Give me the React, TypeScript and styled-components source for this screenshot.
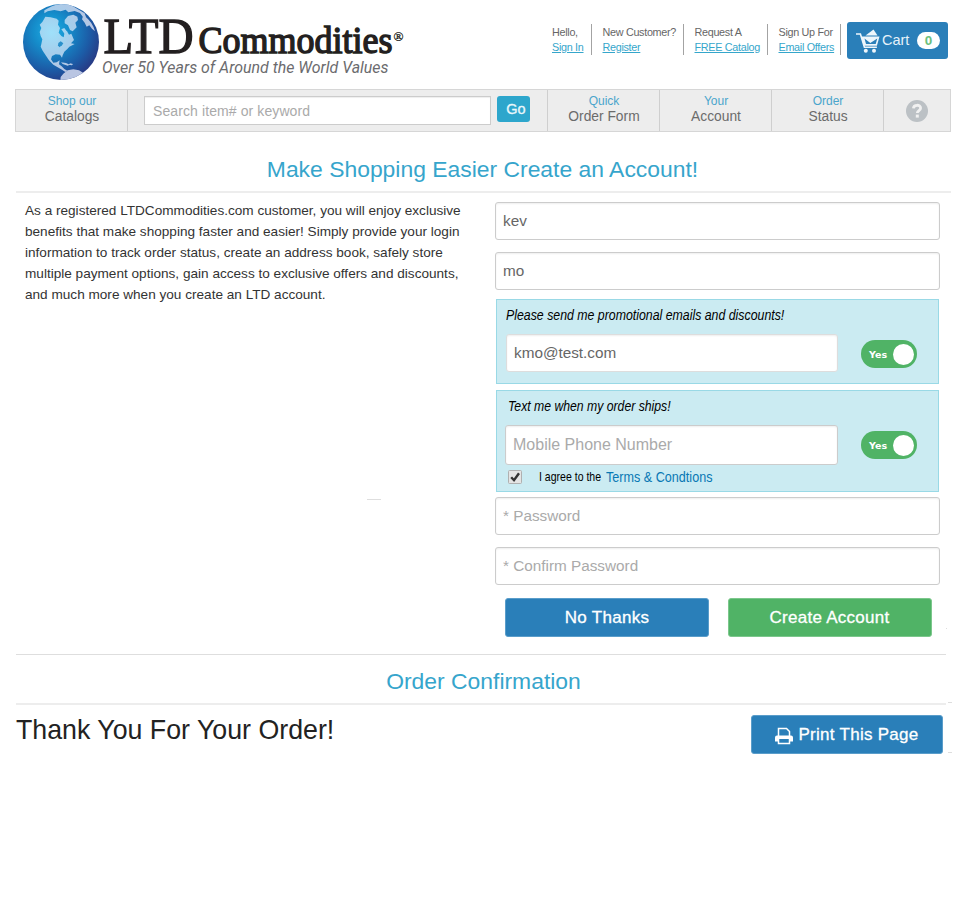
import React from "react";
import styled, { createGlobalStyle } from "styled-components";

const GlobalStyle = createGlobalStyle`
  *, *::before, *::after { box-sizing: border-box; }
  body { margin: 0; background: #fff; font-family: "Liberation Sans", Arial, sans-serif; }
  button, input { font-family: inherit; }
`;

const Page = styled.div`
  position: relative;
  width: 973px;
  height: 904px;
  overflow: hidden;
  background: #fff;
`;

/* ---------- header ---------- */

const Header = styled.header`
  display: flex;
  align-items: flex-start;
  height: 89px;
  padding: 0 25px 0 20px;
`;

const Logo = styled.svg`
  display: block;
  width: 400px;
  height: 84px;
`;

const Links = styled.div`
  display: flex;
  margin-left: auto;
  padding-top: 24px;
`;

const LinkGroup = styled.div<{ $width: number }>`
  display: flex;
  flex-direction: column;
  align-items: flex-start;
  width: ${(p) => p.$width}px;
  height: 31px;
  padding: 1px 0 0 10.5px;
  border-right: 1px solid #a3a3a3;
  font-size: 10.8px;
  letter-spacing: -0.3px;
  line-height: 15px;
  white-space: nowrap;
  color: #666;
`;

const HeaderLink = styled.a`
  color: #35a6cb;
  text-decoration: underline;
`;

const CartButton = styled.button`
  display: flex;
  align-items: center;
  width: 101px;
  height: 37px;
  margin: 22px 0 0 6px;
  padding: 0 8px 0 9px;
  border: 0;
  border-radius: 3px;
  background: #2a7fb9;
  color: #e6f2fa;
  font-size: 14.5px;
`;

const CartLabel = styled.span`
  padding-bottom: 2px;
`;

const CartIcon = styled.svg`
  width: 24px;
  height: 24px;
  margin-right: 2px;
`;

const CartCount = styled.span`
  display: flex;
  align-items: center;
  justify-content: center;
  width: 23px;
  height: 17px;
  margin-left: auto;
  border-radius: 9px;
  background: #fff;
  color: #6cc07c;
  font-size: 13.5px;
  font-weight: bold;
`;

/* ---------- navigation ---------- */

const Nav = styled.nav`
  display: flex;
  width: 936px;
  height: 43px;
  margin-left: 15px;
  border: 1px solid #d6d6d6;
  background: #ededed;
`;

const NavItem = styled.a<{ $width: number }>`
  display: flex;
  flex-direction: column;
  align-items: center;
  width: ${(p) => p.$width}px;
  padding: 4px 0 0 1px;
  border-right: 1px solid #cfcfcf;
  font-size: 13.8px;
  line-height: 16px;
  color: #6b6b6b;
`;

const NavHint = styled.span`
  font-size: 12px;
  line-height: 15px;
  color: #4aa5cc;
`;

const Search = styled.form`
  display: flex;
  width: 420px;
  padding: 6px 0 0 16px;
  border-right: 1px solid #cfcfcf;
`;

const SearchInput = styled.input`
  width: 347px;
  height: 29px;
  margin-right: 6px;
  padding: 0 8px;
  border: 1px solid #ccc;
  background: #fff;
  font-size: 14px;
  letter-spacing: 0.1px;
  box-shadow: inset 0 1px 1px #eee;
  &::placeholder { color: #aaa; opacity: 1; }
`;

const GoButton = styled.button`
  width: 33px;
  height: 26px;
  padding: 0 0 0 5px;
  border: 0;
  border-radius: 3px;
  background: #2da6cc;
  color: #e9f7fb;
  font-size: 14.5px;
  -webkit-text-stroke: 0.3px #e9f7fb;
`;

const HelpCell = styled.div`
  display: flex;
  flex: 1;
  align-items: center;
  justify-content: center;
`;

/* ---------- headings ---------- */

const SectionTitle = styled.h1`
  width: 935px;
  height: 61px;
  margin: 0 0 0 16px;
  padding: 11px 2px 0 0;
  border-bottom: 2px solid #ededed;
  text-align: center;
  font-size: 22.9px;
  font-weight: normal;
  line-height: 52px;
  color: #36a5cc;
`;

/* ---------- registration ---------- */

const Registration = styled.section`
  display: flex;
  height: 461px;
`;

const Intro = styled.p`
  width: 470px;
  margin: 0;
  padding: 7px 0 0 25px;
  font-size: 13.6px;
  line-height: 21px;
  color: #333;
  white-space: nowrap;
`;

const Form = styled.form`
  display: flex;
  flex-direction: column;
  width: 445px;
  margin-left: 25px;
  padding-top: 9px;
`;

const Field = styled.input<{ $gap?: number; $size?: number }>`
  flex: none;
  width: 445px;
  height: 38px;
  margin: 0 0 ${(p) => p.$gap ?? 0}px;
  padding: 0 7px 1px;
  border: 1px solid #ccc;
  border-radius: 3px;
  background: #fff;
  box-shadow: inset 0 1px 2px #eee;
  color: #666;
  font-size: ${(p) => p.$size ?? 15.3}px;
  &::placeholder { color: #aaa; opacity: 1; }
`;

const EmailField = styled(Field)`
  width: 332px;
  border-color: #ddd;
`;

const PhoneField = styled(Field)`
  width: 333px;
  height: 40px;
  margin-left: -1px;
`;

const OptIn = styled.div<{ $height: number; $gap: number }>`
  flex: none;
  width: 443px;
  height: ${(p) => p.$height}px;
  margin: 0 0 ${(p) => p.$gap}px 1px;
  padding: 6px 0 0 9px;
  border: 1px solid #99d9e6;
  background: #cbebf2;
`;

/* Narrow lettering, condensed horizontally from the regular face. */
const Condensed = styled.span<{ $scale: number }>`
  display: inline-block;
  transform: scaleX(${(p) => p.$scale});
  transform-origin: left center;
  white-space: nowrap;
`;

const OptInLabel = styled.div<{ $indent: number }>`
  height: 28px;
  padding-left: ${(p) => p.$indent}px;
  font-size: 15px;
  font-style: italic;
  line-height: 18px;
  color: #000;
`;

const OptInRow = styled.div`
  display: flex;
  align-items: flex-start;
`;

const Toggle = styled.button`
  display: flex;
  align-items: center;
  justify-content: space-between;
  width: 56px;
  height: 28px;
  margin: 6px 0 0 23px;
  padding: 0 3px 0 8px;
  border: 0;
  border-radius: 14px;
  background: #50b366;
  color: #fff;
  font-family: "DejaVu Sans", sans-serif;
  font-size: 9.5px;
  font-weight: bold;
`;

const Knob = styled.span`
  width: 21px;
  height: 21px;
  margin-top: 1px;
  border-radius: 50%;
  background: #fff;
`;

const Agreement = styled.label`
  display: flex;
  align-items: center;
  height: 23px;
  padding-left: 2px;
  color: #000;
`;

const CheckIcon = styled.svg`
  width: 14px;
  height: 14px;
  margin-right: 17px;
`;

const AgreeText = styled.span`
  width: 67px;
  font-size: 13px;
`;

const Terms = styled.a`
  font-size: 15px;
  color: #0878b4;
`;

const Actions = styled.div`
  display: flex;
  justify-content: space-between;
  padding: 13px 8.5px 0 10px;
`;

const Button = styled.button<{ $tone: "blue" | "green"; $width: number }>`
  display: flex;
  align-items: center;
  justify-content: center;
  width: ${(p) => p.$width}px;
  height: 39px;
  padding: 0;
  border: 1px solid ${(p) => (p.$tone === "blue" ? "#5a9dca" : "#7cc78c")};
  border-radius: 3px;
  background: ${(p) => (p.$tone === "blue" ? "#2a7fb9" : "#50b366")};
  color: #fff;
  font-size: 17px;
  letter-spacing: 0.28px;
  -webkit-text-stroke: 0.3px #fff;
`;

/* ---------- confirmation ---------- */

const Confirmation = styled.section`
  width: 930px;
  margin-left: 16px;
  border-top: 1px solid #dedede;
`;

const ConfirmTitle = styled(SectionTitle)`
  width: 930px;
  height: 50px;
  margin-left: 0;
  padding: 0 0 0 5px;
`;

const ThankRow = styled.div`
  display: flex;
  align-items: flex-start;
  justify-content: space-between;
  padding: 10px 3px 0 0;
`;

const Thanks = styled.h2`
  margin: -1px 0 0;
  font-size: 26.75px;
  font-weight: normal;
  line-height: 32px;
  color: #222;
`;

const PrintIcon = styled.svg`
  width: 18px;
  height: 18px;
  margin: 2px 5px 0 0;
`;

const Speck = styled.i<{ $x: number; $y: number; $w: number }>`
  position: absolute;
  left: ${(p) => p.$x}px;
  top: ${(p) => p.$y}px;
  width: ${(p) => p.$w}px;
  height: 1px;
  background: #dedede;
`;

function BrandLogo() {
  return (
    <Logo viewBox="20 0 400 84" role="img" aria-label="LTD Commodities">
      <defs>
        <radialGradient id="ocean" cx="0.37" cy="0.36" r="0.68">
          <stop offset="0" stopColor="#1fb0e6" />
          <stop offset="0.35" stopColor="#158cca" />
          <stop offset="0.75" stopColor="#1c5ba6" />
          <stop offset="1" stopColor="#273c86" />
        </radialGradient>
        <radialGradient id="land" gradientUnits="userSpaceOnUse" cx="125" cy="98" r="125">
          <stop offset="0" stopColor="#9fe0fa" />
          <stop offset="0.5" stopColor="#a5cdeb" />
          <stop offset="1" stopColor="#b9c5e2" />
        </radialGradient>
        <clipPath id="disc"><circle cx="153" cy="126" r="114" /></clipPath>
      </defs>
      <g transform="translate(10 0) scale(.33333)">
        <circle cx="153" cy="126" r="114" fill="url(#ocean)" />
        <g clipPath="url(#disc)" fill="url(#land)">
          <path d="M106 50L122 52L140 56L146 62L144 74L150 84L146 98L154 108L161 112L164 96L171 94L177 104L184 101L192 120L183 130L194 132L178 140L172 147L163 155L158 166L156 173L150 164L137 163L126 168L123 178L130 188L140 187L149 181L147 193L155 199L163 207L172 212L166 216L156 209L143 202L130 194L117 181L108 167L98 152L92 140L94 132L97 118L92 108L89 96L94 84L89 74L97 66Z" />
          <path d="M164 60L174 48L190 44L202 50L204 60L196 68L200 82L188 94L180 90L174 76L164 70Z" />
          <path d="M103 31Q145 4 181 14L224 40L229 54L219 51L210 39L194 33L175 37L167 29L152 34L133 30L113 34L103 40Z" />
          <path d="M220 45Q248 66 255 94L246 86L238 76L230 80L224 68L216 58Z" />
          <path d="M151 242L152 231L160 221L173 211L190 208L207 211L219 218L227 217L242 224L212 248Z" />
          <path d="M153 187L168 189L179 194L173 197L158 192ZM180 190L189 192L186 196L177 194Z" />
          <path d="M154 88L163 84L172 96L164 102Z" />
        </g>
        <path d="M145 129L152 124L160 130L156 136L148 142L144 136Z" fill="#2a90cb" />
      </g>
      <g fill="#231f20" stroke="#231f20" fontFamily="Liberation Serif, serif">
        <text x="103.500" y="53" fontSize="50" strokeWidth="1.3" textLength="90" lengthAdjust="spacingAndGlyphs">LTD</text>
        <text x="198.500" y="52.500" fontSize="37" strokeWidth="1.4" textLength="194" lengthAdjust="spacingAndGlyphs">Commodities</text>
        <text x="393.500" y="41" fontSize="13" strokeWidth="0.3" textLength="10" lengthAdjust="spacingAndGlyphs">®</text>
      </g>
      <text x="102" y="73" fill="#6b6b6e" fontFamily="Roboto, sans-serif" fontStyle="italic" fontSize="16.8" textLength="286.500" lengthAdjust="spacingAndGlyphs">Over 50 Years of Around the World Values</text>
    </Logo>
  );
}

const Yes = () => <Toggle type="button">Yes<Knob /></Toggle>;

export default function App() {
  return (
    <Page>
      <GlobalStyle />
      <Header>
        <BrandLogo />
        <Links>
          <LinkGroup $width={50.5}><span>Hello,</span><HeaderLink>Sign In</HeaderLink></LinkGroup>
          <LinkGroup $width={92}><span>New Customer?</span><HeaderLink>Register</HeaderLink></LinkGroup>
          <LinkGroup $width={84}><span>Request A</span><HeaderLink>FREE Catalog</HeaderLink></LinkGroup>
          <LinkGroup $width={73}><span>Sign Up For</span><HeaderLink>Email Offers</HeaderLink></LinkGroup>
        </Links>
        <CartButton>
          <CartIcon viewBox="0 0 24 24">
            <path d="M0 5h4.4l4 13.2h12.5" fill="none" stroke="#eef6fb" strokeWidth="1.6" />
            <path d="M5 7.5h18.5l-2.6 9.2H7.8z" fill="#eef6fb" />
            <path d="M8.5 9.5l5.8 4.5 7-4.5-1.600 5.500H10z" fill="#2a7fb9" />
            <path d="M9.5 6.5L17.5 0.5l4 6z" fill="#eef6fb" />
            <circle cx="9.8" cy="21.7" r="2" fill="#eef6fb" />
            <circle cx="18" cy="21.7" r="2" fill="#eef6fb" />
          </CartIcon>
          <CartLabel>Cart</CartLabel>
          <CartCount>0</CartCount>
        </CartButton>
      </Header>

      <Nav>
        <NavItem $width={112}><NavHint>Shop our</NavHint>Catalogs</NavItem>
        <Search>
          <SearchInput placeholder="Search item# or keyword" />
          <GoButton type="button">Go</GoButton>
        </Search>
        <NavItem $width={112}><NavHint>Quick</NavHint>Order Form</NavItem>
        <NavItem $width={112}><NavHint>Your</NavHint>Account</NavItem>
        <NavItem $width={112}><NavHint>Order</NavHint>Status</NavItem>
        <HelpCell>
          <svg width="22" height="22" viewBox="0 0 22 22">
            <circle cx="11" cy="11" r="11" fill="#bcc1c5" />
            <path d="M7.4 8.3c.3-4 7.2-4 7.2-.2 0 2.6-3.3 2.4-3.3 5" fill="none" stroke="#f1f1f1" strokeWidth="2.8" />
            <rect x="9.8" y="14.6" width="3" height="3" fill="#f1f1f1" />
          </svg>
        </HelpCell>
      </Nav>

      <SectionTitle>Make Shopping Easier Create an Account!</SectionTitle>

      <Registration>
        <Intro>
          As a registered LTDCommodities.com customer, you will enjoy exclusive<br />
          benefits that make shopping faster and easier! Simply provide your login<br />
          information to track order status, create an address book, safely store<br />
          multiple payment options, gain access to exclusive offers and discounts,<br />
          and much more when you create an LTD account.
        </Intro>
        <Form>
          <Field defaultValue="kev" $gap={12} />
          <Field defaultValue="mo" $gap={9} />
          <OptIn $height={85} $gap={6}>
            <OptInLabel $indent={0}>
              <Condensed $scale={0.822}>Please send me promotional emails and discounts!</Condensed>
            </OptInLabel>
            <OptInRow><EmailField defaultValue="kmo@test.com" /><Yes /></OptInRow>
          </OptIn>
          <OptIn $height={102} $gap={5}>
            <OptInLabel $indent={2}>
              <Condensed $scale={0.815}>Text me when my order ships!</Condensed>
            </OptInLabel>
            <OptInRow><PhoneField placeholder="Mobile Phone Number" $size={16} /><Yes /></OptInRow>
            <Agreement>
              <CheckIcon viewBox="0 0 14 14">
                <rect x="0.5" y="0.5" width="13" height="13" rx="1" fill="#e4e4e4" stroke="#b0b0b0" />
                <path d="M3.2 7.2l2.8 3 5-7" fill="none" stroke="#333" strokeWidth="2.4" />
              </CheckIcon>
              <AgreeText><Condensed $scale={0.81}>I agree to the</Condensed></AgreeText>
              <Terms><Condensed $scale={0.84}>Terms &amp; Condtions</Condensed></Terms>
            </Agreement>
          </OptIn>
          <Field placeholder="* Password" $gap={12} />
          <Field placeholder="* Confirm Password" />
          <Actions>
            <Button type="button" $tone="blue" $width={204}>No Thanks</Button>
            <Button type="button" $tone="green" $width={204}>Create Account</Button>
          </Actions>
        </Form>
      </Registration>

      <Confirmation>
        <ConfirmTitle as="h2">Order Confirmation</ConfirmTitle>
        <ThankRow>
          <Thanks>Thank You For Your Order!</Thanks>
          <Button type="button" $tone="blue" $width={192}>
            <PrintIcon viewBox="0 0 18 18">
              <path d="M3.5 9V1.5h8L14.5 4.5V9M3.5 12v4.5h11V12" fill="none" stroke="#fff" strokeWidth="1.5" />
              <path d="M2 8.5h14q2 0 2 2V14.5h-3.5v-2.5H3.5v2.5H0V10.5q0-2 2-2z" fill="#fff" />
            </PrintIcon>
            Print This Page
          </Button>
        </ThankRow>
      </Confirmation>

      <Speck $x={367} $y={499} $w={14} />
      <Speck $x={948} $y={702} $w={4} />
      <Speck $x={948} $y={752} $w={4} />
      <Speck $x={946} $y={628} $w={1} />
    </Page>
  );
}
